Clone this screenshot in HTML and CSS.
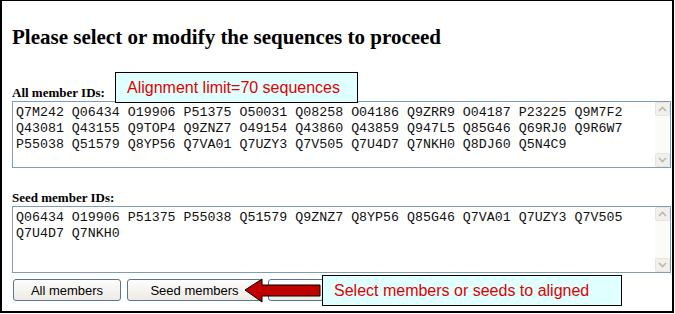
FILE: index.html
```html
<!DOCTYPE html>
<html lang="en">
<head>
    <meta charset="UTF-8">
    <title>Select sequences</title>
    <link rel="stylesheet" href="styles.css">
</head>
<body>
    <div class="frame">
        <h3 class="title">Please select or modify the sequences to proceed</h3>

        <div class="label label-first">All member IDs:</div>
        <div class="field">
            <textarea class="ids" spellcheck="false">Q7M242 Q06434 O19906 P51375 O50031 Q08258 O04186 Q9ZRR9 O04187 P23225 Q9M7F2
Q43081 Q43155 Q9TOP4 Q9ZNZ7 O49154 Q43860 Q43859 Q947L5 Q85G46 Q69RJ0 Q9R6W7
P55038 Q51579 Q8YP56 Q7VA01 Q7UZY3 Q7V505 Q7U4D7 Q7NKH0 Q8DJ60 Q5N4C9</textarea>
            <div class="scroll">
                <span class="arrow"><svg width="9" height="6" viewBox="0 0 9 6"><path d="M1 5 L4.5 1.5 L8 5" fill="none" stroke="#b8b8b0" stroke-width="1.6"/></svg></span>
                <span class="arrow"><svg width="9" height="6" viewBox="0 0 9 6"><path d="M1 1 L4.5 4.5 L8 1" fill="none" stroke="#b8b8b0" stroke-width="1.6"/></svg></span>
            </div>
        </div>

        <div class="label label-second">Seed member IDs:</div>
        <div class="field">
            <textarea class="ids" spellcheck="false">Q06434 O19906 P51375 P55038 Q51579 Q9ZNZ7 Q8YP56 Q85G46 Q7VA01 Q7UZY3 Q7V505
Q7U4D7 Q7NKH0</textarea>
            <div class="scroll">
                <span class="arrow"><svg width="9" height="6" viewBox="0 0 9 6"><path d="M1 5 L4.5 1.5 L8 5" fill="none" stroke="#b8b8b0" stroke-width="1.6"/></svg></span>
                <span class="arrow"><svg width="9" height="6" viewBox="0 0 9 6"><path d="M1 1 L4.5 4.5 L8 1" fill="none" stroke="#b8b8b0" stroke-width="1.6"/></svg></span>
            </div>
        </div>

        <div class="controls">
            <button class="btn btn-all">All members</button>
            <button class="btn btn-seed">Seed members</button>
            <button class="btn btn-other">&nbsp;</button>
        </div>

        <!-- annotation overlays -->
        <div class="callout callout-limit">Alignment limit=70 sequences</div>
        <svg class="pointer" width="80" height="26" viewBox="0 0 80 26">
            <polygon points="1,12 18,1 18,7 76,7 76,18 18,18 18,24" fill="#c00000" stroke="#000" stroke-width="1"/>
        </svg>
        <div class="callout callout-select">Select members or seeds to aligned</div>
    </div>
</body>
</html>
```

FILE: styles.css
```css
body {
    margin: 0;
    background: #fff;
}
.frame {
    position: relative;
    box-sizing: border-box;
    width: 674px;
    height: 313px;
    border: 2px solid #000;
    border-top-width: 1px;
    padding-left: 10px;
    font-family: "Liberation Serif", "Times New Roman", serif;
    color: #000;
}
.title {
    margin: 24px 0 0;
    font-size: 21px;
    line-height: 24px;
    font-weight: bold;
}
.label {
    font-size: 13px;
    line-height: 16px;
    font-weight: bold;
}
.label-first {
    margin-top: 36px;
}
.label-second {
    margin-top: 22px;
}
.field {
    display: flex;
    box-sizing: border-box;
    width: 659px;
    height: 67px;
    border: 1px solid #7f9db9;
    background: #fff;
}
.ids {
    flex: 1;
    margin: 0;
    padding: 3px 3px 0;
    border: none;
    outline: none;
    resize: none;
    overflow: hidden;
    white-space: pre;
    font-family: "Liberation Mono", "Courier New", monospace;
    font-size: 13.3px;
    line-height: 16px;
    color: #111;
    background: #fff;
}
.scroll {
    display: flex;
    flex-direction: column;
    justify-content: space-between;
    width: 15px;
    background: #fbfbf8;
}
.arrow {
    display: flex;
    align-items: center;
    justify-content: center;
    box-sizing: border-box;
    height: 14px;
    border: 1px solid #e6e5de;
    border-radius: 2px;
    background: #f1f0ea;
}
.controls {
    display: flex;
    gap: 6px;
    margin-top: 6px;
    padding-left: 1px;
}
.btn {
    box-sizing: border-box;
    height: 22px;
    padding: 0;
    border: 1px solid #5a7590;
    border-radius: 3px;
    background: linear-gradient(#fdfdfb, #ecebe6);
    font-family: "Liberation Sans", Arial, sans-serif;
    font-size: 13px;
    color: #000;
}
.btn-all {
    width: 108px;
}
.btn-seed {
    width: 135px;
}
.btn-other {
    width: 70px;
}
.callout {
    position: absolute;
    box-sizing: border-box;
    height: 31px;
    padding-left: 11px;
    border: 1px solid #000;
    background: #e0ffff;
    font-family: "Liberation Sans", Arial, sans-serif;
    font-size: 16px;
    line-height: 29px;
    color: #e00000;
}
.callout-limit {
    left: 113px;
    top: 71px;
    width: 243px;
}
.callout-select {
    left: 320px;
    top: 274px;
    width: 300px;
}
.pointer {
    position: absolute;
    left: 242px;
    top: 277px;
}
```
